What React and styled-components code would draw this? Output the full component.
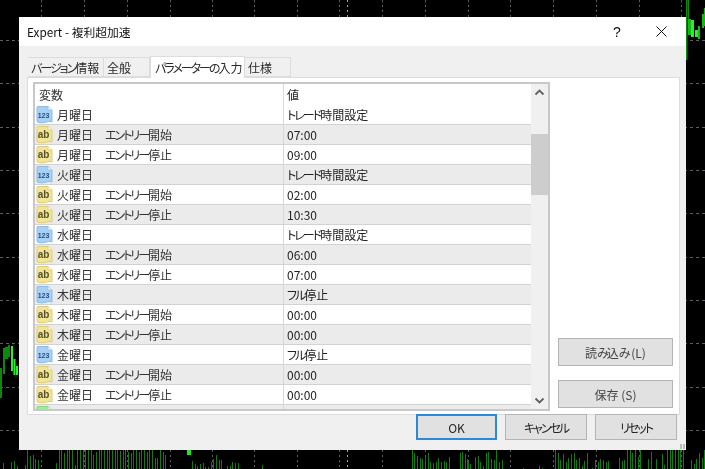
import styled, { createGlobalStyle } from 'styled-components';

const GlobalStyle = createGlobalStyle`
  html, body {
    margin: 0;
    padding: 0;
    background: #000;
  }
  body {
    font-family: "Noto Sans CJK JP", "Noto Sans", sans-serif;
    font-feature-settings: "palt";
  }
`;

const days = ['月', '火', '水', '木', '金'];
const dayValues = [
  ['トレード時間設定', '07:00', '09:00'],
  ['トレード時間設定', '02:00', '10:30'],
  ['トレード時間設定', '06:00', '07:00'],
  ['フル停止', '00:00', '00:00'],
  ['フル停止', '00:00', '00:00'],
];

const rows = days.flatMap((day, i) => [
  { kind: 'num', name: `${day}曜日`, value: dayValues[i][0] },
  { kind: 'str', name: `${day}曜日　エントリー開始`, value: dayValues[i][1] },
  { kind: 'str', name: `${day}曜日　エントリー停止`, value: dayValues[i][2] },
]);

// the dialog font has narrow kana, so kana runs get their own tighter span
const Jp = ({ children }) =>
  children.split(/([\u3041-\u30ff]+)/).map((part, i) =>
    i % 2 === 1 ? <Kana key={i}>{part}</Kana> : part,
  );

const gridX = [41, 84, 127, 170, 212, 254, 297, 339, 382, 425, 468, 510, 553, 596, 639, 681];
const gridY = [40, 83, 127, 170, 213, 257, 300, 343, 387, 430];

// x of the first bar, then the top of each bar counted from y=445 in 3x pixels
const barRuns = [
  [3.3, [55]],
  [11.3, [50, 48, 63]],
  [24.7, [60, 15, 33, 30, 42, 45]],
  [56, [55, 15, 15, 25, 15, 15, 15, 60, 15, 15, 15, 15, 15, 15, 30, 22, 15, 15, 15, 15, 15, 15, 15, 15, 18, 15, 15, 22, 25, 15, 15, 22, 15, 15, 22, 15, 15, 38, 38, 15, 20, 30]],
  [192, [48, 58, 63, 58, 55, 65, 65, 50, 42, 30, 45, 45]],
  [227, [63, 63, 50, 55]],
  [238.3, [55]],
  [262.3, [60]],
  [411.7, [15, 25, 32, 40, 43, 35, 25, 50, 53, 52, 38, 52, 48, 52, 36]],
  [459.7, [25, 20, 28, 50, 60]],
  [467, [42, 58]],
  [475, [36, 33, 50, 62, 25, 20, 42, 44, 15, 50, 45]],
  [523, [68]],
  [539, [63, 68]],
  [555, [15, 25, 45, 28, 52, 40, 28, 25, 45, 40, 63, 48, 25]],
  [592.3, [68, 45, 50, 43, 45, 52, 48]],
  [619, [40, 48, 44, 15, 15, 25, 15, 35, 15]],
  [648.3, [42, 20]],
  [656.3, [42]],
  [661.7, [28, 60, 15, 15, 15, 15, 15, 15, 15]],
  [691, [45, 58, 42, 25, 38, 15]],
];

const bars = barRuns.flatMap(([start, tops]) =>
  tops.map((top, i) => ({ x: Math.round(start + i * 2.667), y: Math.round(445 + top / 3) })),
);

const ChartBackdrop = () => (
  <Chart viewBox="0 0 705 469">
    {gridX.map((x) => (
      <line key={x} x1={x + 0.5} x2={x + 0.5} y1="0" y2="469" stroke="#5a5f66" strokeDasharray="2 3" />
    ))}
    <line x1="347.5" x2="347.5" y1="0" y2="469" stroke="#a8a8a8" strokeDasharray="2 3" />
    {gridY.map((y) => (
      <line key={y} x1="0" x2="705" y1={y + 0.5} y2={y + 0.5} stroke="#5a5f66" strokeDasharray="3 3" />
    ))}
    {bars.map((b, i) => (
      <rect key={i} x={b.x} y={b.y} width="1" height={469 - b.y} fill="#0f7d0f" />
    ))}
    <rect x="187" y="450" width="4" height="5" fill="#22e022" />

    <rect x="0" y="368" width="2" height="30" fill="#0a8a0a" />
    <rect x="3" y="348" width="2" height="26" fill="#0a8a0a" />
    <rect x="5" y="347" width="3" height="12" fill="#0a8a0a" />
    <rect x="8" y="345" width="2" height="12" fill="#0a8a0a" />
    <rect x="11" y="346" width="2" height="25" fill="#2cee2c" />
    <rect x="13.5" y="359" width="2" height="16" fill="#2cee2c" />
    <rect x="16" y="366" width="2" height="9" fill="#2cee2c" />

    <rect x="686" y="0" width="1.5" height="60" fill="#0a8a0a" />
    <rect x="688" y="0" width="1" height="20" fill="#0a8a0a" />
    <rect x="688" y="19" width="3" height="16" fill="#17b717" />
    <rect x="691" y="20" width="3" height="17" fill="#2cee2c" />
    <rect x="695" y="30" width="3" height="7" fill="#2cee2c" />
    <rect x="698" y="26" width="2" height="13" fill="#17b717" />
    <rect x="702" y="14" width="2" height="14" fill="#17b717" />
    <rect x="704" y="8" width="1" height="18" fill="#17b717" />
  </Chart>
);

const ParamIcon = ({ kind }) => {
  const look = {
    num: { fill: '#a9d0f2', edge: '#8dbde6', text: '#1d4f86', label: '123', size: 7 },
    str: { fill: '#f2e597', edge: '#ddcc7a', text: '#55522a', label: 'ab', size: 10 },
    bool: { fill: '#a5e8a0', edge: '#86d682', text: '#235c20', label: '', size: 8 },
  }[kind];
  return (
    <IconBox viewBox="0 0 17 18">
      <path
        d="M1 1.5 Q1 0.5 2 0.5 H12 L16 4 V16 Q13 14.5 10 16.2 Q6 17.5 2 16.3 Q1 16.1 1 15 Z"
        fill={look.fill}
        stroke={look.edge}
      />
      <path d="M12 0.5 V4 H16" fill="#fdf8df" stroke={look.edge} strokeWidth="0.7" />
      <text x="7.5" y="12" textAnchor="middle" fontSize={look.size} fontWeight="700" fontFamily="Liberation Sans, sans-serif" fill={look.text}>
        {look.label}
      </text>
    </IconBox>
  );
};

const Chevron = ({ up }) => (
  <svg width="11" height="7" viewBox="0 0 11 7">
    <path d={up ? 'M1.5 5.5 L5.5 1.5 L9.5 5.5' : 'M1.5 1.5 L5.5 5.5 L9.5 1.5'} fill="none" stroke="#606060" strokeWidth="1.8" />
  </svg>
);

const App = () => (
  <Desktop>
    <GlobalStyle />
    <ChartBackdrop />
    <Dialog>
      <TitleBar>
        <Title>Expert - 複利超加速</Title>
        <HelpMark>?</HelpMark>
        <CloseMark width="11" height="11" viewBox="0 0 11 11">
          <path d="M0.5 0.5 L10.5 10.5 M10.5 0.5 L0.5 10.5" stroke="#111" strokeWidth="1" fill="none" />
        </CloseMark>
      </TitleBar>
      <Body>
        <TabStrip>
          <Tab $width={76}><Jp>バージョン情報</Jp></Tab>
          <Tab $width={46}>全般</Tab>
          <Tab $width={95} $active><Jp>パラメーターの入力</Jp></Tab>
          <Tab $width={46}>仕様</Tab>
        </TabStrip>
        <Panel>
          <ListBox>
            <ListScroll>
              <HeaderRow>
                <NameCell $header>変数</NameCell>
                <ValueCell>値</ValueCell>
              </HeaderRow>
              {rows.map((row, i) => (
                <Row key={row.name} $shaded={i % 2 === 1}>
                  <NameCell>
                    <ParamIcon kind={row.kind} />
                    <span><Jp>{row.name}</Jp></span>
                  </NameCell>
                  <ValueCell><span><Jp>{row.value}</Jp></span></ValueCell>
                </Row>
              ))}
              <Row $shaded>
                <NameCell>
                  <ParamIcon kind="bool" />
                </NameCell>
                <ValueCell />
              </Row>
            </ListScroll>
            <ScrollBar>
              <ScrollEnd>
                <Chevron up />
              </ScrollEnd>
              <ThumbTrack>
                <Thumb />
              </ThumbTrack>
              <ScrollEnd>
                <Chevron />
              </ScrollEnd>
            </ScrollBar>
          </ListBox>
          <SideColumn>
            <SideButton><Jp>読み込み (L)</Jp></SideButton>
            <SideButton>保存 (S)</SideButton>
          </SideColumn>
        </Panel>
        <Footer>
          <FooterButton $width={81} $primary>OK</FooterButton>
          <FooterButton $width={82}><Jp>キャンセル</Jp></FooterButton>
          <FooterButton $width={82}><Jp>リセット</Jp></FooterButton>
        </Footer>
      </Body>
      <Grip />
    </Dialog>
  </Desktop>
);

export default App;

// Styles
const Desktop = styled.div`
  position: relative;
  width: 705px;
  height: 469px;
  overflow: hidden;
  background: #000;
  filter: blur(0.35px);
`;

const Chart = styled.svg`
  position: absolute;
  inset: 0;
  width: 705px;
  height: 469px;
`;

const Kana = styled.span`
  letter-spacing: -2px;
`;

const Dialog = styled.div`
  position: absolute;
  left: 19px;
  top: 17px;
  width: 667px;
  height: 433px;
  display: flex;
  flex-direction: column;
  background: #f0f0f0;
  color: #2a2a2a;
`;

const TitleBar = styled.div`
  height: 29px;
  flex: none;
  display: flex;
  align-items: center;
  padding-left: 8px;
  background: #fff;
  color: #111;
`;

const Title = styled.div`
  flex: 1;
  font-size: 11.8px;
`;

const HelpMark = styled.div`
  width: 14px;
  margin-right: 32px;
  text-align: center;
  font-family: "Liberation Sans", sans-serif;
  font-size: 14px;
`;

const CloseMark = styled.svg`
  margin-right: 19px;
`;

const Body = styled.div`
  flex: 1;
  display: flex;
  flex-direction: column;
  padding: 9px 6px 0 8px;
`;

const TabStrip = styled.div`
  display: flex;
  align-items: flex-end;
  height: 22px;
  flex: none;
  padding-left: 1px;
`;

const Tab = styled.div`
  box-sizing: border-box;
  width: ${({ $width }) => $width}px;
  height: ${({ $active }) => ($active ? 22 : 20)}px;
  margin-bottom: ${({ $active }) => ($active ? -1 : 0)}px;
  padding-left: ${({ $active }) => ($active ? 4 : 3)}px;
  display: flex;
  align-items: center;
  font-size: 12px;
  white-space: nowrap;
  background: ${({ $active }) => ($active ? '#fff' : '#f0f0f0')};
  border: 1px solid #dcdcdc;
  border-bottom: ${({ $active }) => ($active ? 'none' : '1px solid #dcdcdc')};
  border-left: ${({ $active }) => ($active ? '1px solid #dcdcdc' : 'none')};
  position: relative;
  z-index: ${({ $active }) => ($active ? 1 : 0)};
`;

const Panel = styled.div`
  box-sizing: border-box;
  height: 338px;
  flex: none;
  display: flex;
  padding: 4px 6px 3px 5px;
  background: #fff;
  border: 1px solid #dcdcdc;
`;

const ListBox = styled.div`
  box-sizing: border-box;
  width: 517px;
  height: 329px;
  flex: none;
  display: flex;
  overflow: hidden;
  border: 2px solid #c8c8cc;
  background: #fff;
`;

const ListScroll = styled.div`
  flex: 1;
  min-width: 0;
  overflow: hidden;
`;

const HeaderRow = styled.div`
  display: grid;
  grid-template-columns: 248px 1fr;
  height: 21px;
  font-size: 12px;
`;

const Row = styled(HeaderRow)`
  box-sizing: border-box;
  height: 20px;
  background: ${({ $shaded }) => ($shaded ? '#ebebeb' : '#fff')};
  border-bottom: 1px solid #d2d2d2;
`;

const NameCell = styled.div`
  display: flex;
  align-items: center;
  gap: 4px;
  padding-left: ${({ $header }) => ($header ? 4 : 1)}px;
  white-space: nowrap;
  color: #333;
`;

const ValueCell = styled.div`
  display: flex;
  align-items: center;
  padding-left: 3px;
  border-left: 1px solid #d8d8d8;
  color: #222;
`;

const IconBox = styled.svg`
  width: 17px;
  height: 18px;
  flex: none;
`;

const ScrollBar = styled.div`
  width: 17px;
  flex: none;
  display: flex;
  flex-direction: column;
  background: #f0f0f0;
`;

const ScrollEnd = styled.div`
  height: 17px;
  flex: none;
  display: flex;
  align-items: center;
  justify-content: center;
`;

const ThumbTrack = styled.div`
  flex: 1;
  padding-top: 33px;
`;

const Thumb = styled.div`
  height: 61px;
  background: #cdcdcd;
`;

const SideColumn = styled.div`
  flex: 1;
  display: flex;
  flex-direction: column;
  justify-content: flex-end;
  gap: 14px;
  padding-left: 8px;
  padding-bottom: 3px;
`;

const SideButton = styled.button`
  box-sizing: border-box;
  width: 115px;
  height: 28px;
  padding: 0;
  background: #e1e1e1;
  border: 1px solid #b4b4b4;
  font: inherit;
  font-size: 12px;
  color: #444;
`;

const Footer = styled.div`
  display: flex;
  justify-content: flex-end;
  gap: 8px;
  margin-top: -1px;
  padding-right: 3px;
  position: relative;
`;

const FooterButton = styled.button`
  box-sizing: border-box;
  width: ${({ $width }) => $width}px;
  height: 26px;
  padding: 0;
  background: #e1e1e1;
  border: ${({ $primary }) => ($primary ? '2px solid #2b8ad6' : '1px solid #b4b4b4')};
  font: inherit;
  font-size: 12px;
  color: #222;
`;

const Grip = styled.div`
  position: absolute;
  right: 1px;
  bottom: 1px;
  width: 5px;
  height: 5px;
  background: repeating-linear-gradient(90deg, #bcbcbc 0 2px, transparent 2px 3px);
`;
